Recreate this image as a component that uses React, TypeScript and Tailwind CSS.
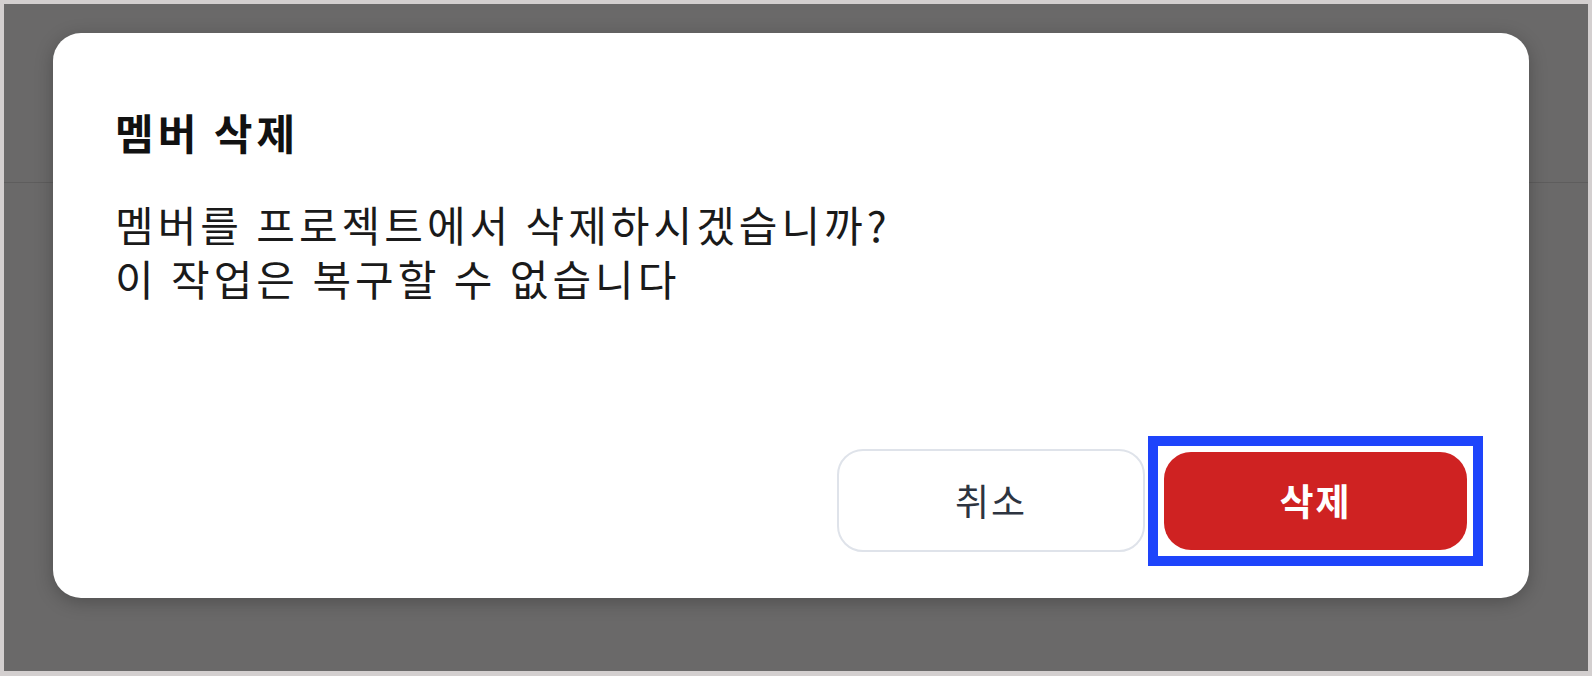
import React from "react";

export default function App() {
  return (
    <div className="w-[1592px] h-[676px] bg-[#d3cfcf] pt-[4px] px-[4px] pb-[5px] font-['Noto_Sans_CJK_KR',sans-serif]">
      <div className="relative h-full bg-[#6a6969] overflow-hidden">
        <div className="h-[179px] border-b border-[#5e5d5d]" />
        <div className="absolute inset-0 pt-[29px] pl-[49px]">
          <div className="w-[1476px] h-[565px] bg-white rounded-[28px] shadow-[0_4px_18px_rgba(0,0,0,0.25)] flex flex-col pl-[62px] pr-[62px] pt-[69px]">
            <h2 className="text-[42px] leading-[60px] tracking-[4px] font-bold text-[#111111]">멤버 삭제</h2>
            <div className="mt-[35px] text-[42px] leading-[54px] tracking-[4px] text-[#1a1a1a]">
              <p>멤버를 프로젝트에서 삭제하시겠습니까?</p>
              <p>이 작업은 복구할 수 없습니다</p>
            </div>
            <div className="mt-auto mb-[46px] flex justify-end items-center gap-[19px]">
              <button className="w-[308px] h-[103px] rounded-[26px] border-2 border-[#dfe3ea] bg-white text-[37px] tracking-[2px] text-[#2d3440] flex items-center justify-center">
                취소
              </button>
              <div className="relative">
                <button className="w-[303px] h-[98px] rounded-[27px] bg-[#cf2222] text-white text-[37px] tracking-[2px] font-bold flex items-center justify-center">
                  삭제
                </button>
                <div className="absolute -inset-[16px] border-[10px] border-[#1e44fb] pointer-events-none" />
              </div>
            </div>
          </div>
        </div>
      </div>
    </div>
  );
}
